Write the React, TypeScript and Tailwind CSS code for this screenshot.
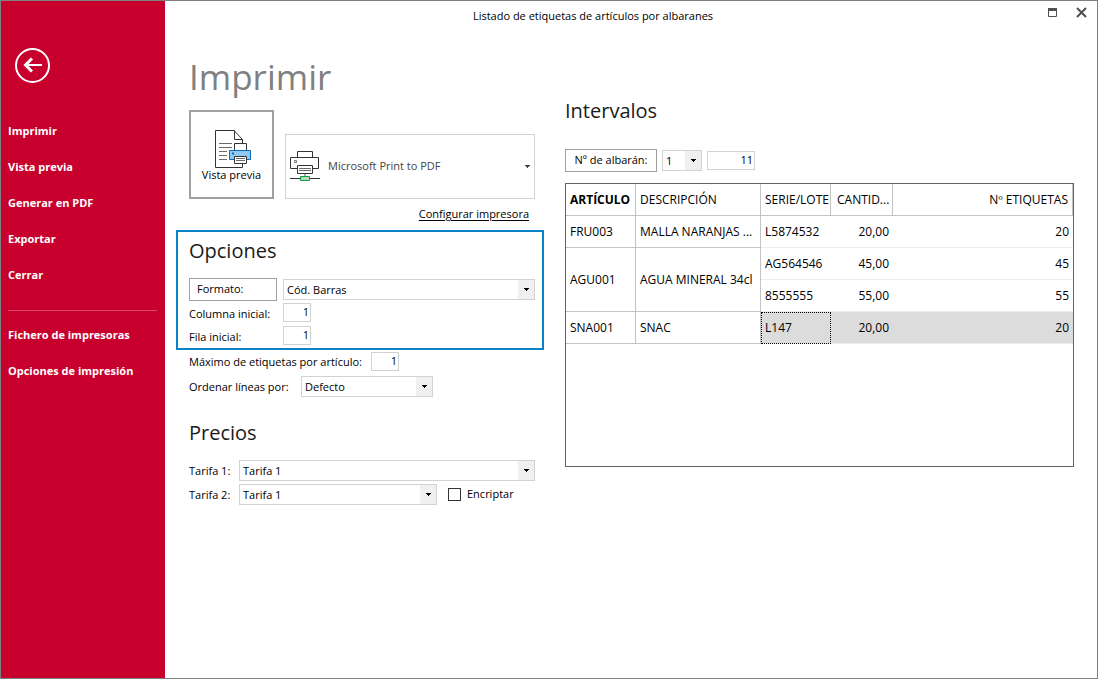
import type { ReactNode } from 'react';

const mainMenu = ['Imprimir', 'Vista previa', 'Generar en PDF', 'Exportar', 'Cerrar'];
const extraMenu = ['Fichero de impresoras', 'Opciones de impresión'];

interface Articulo {
  codigo: string;
  descripcion: string;
  selected?: boolean;
  lotes: Array<{ serie: string; cantidad: string; etiquetas: number }>;
}

const articulos: Articulo[] = [
  {
    codigo: 'FRU003',
    descripcion: 'MALLA NARANJAS ...',
    lotes: [{ serie: 'L5874532', cantidad: '20,00', etiquetas: 20 }],
  },
  {
    codigo: 'AGU001',
    descripcion: 'AGUA MINERAL 34cl',
    lotes: [
      { serie: 'AG564546', cantidad: '45,00', etiquetas: 45 },
      { serie: '8555555', cantidad: '55,00', etiquetas: 55 },
    ],
  },
  {
    codigo: 'SNA001',
    descripcion: 'SNAC',
    selected: true,
    lotes: [{ serie: 'L147', cantidad: '20,00', etiquetas: 20 }],
  },
];

function BackIcon() {
  return (
    <svg width="35" height="35" viewBox="0 0 35 35" fill="none" stroke="#fff" strokeWidth="2">
      <circle cx="17.5" cy="17.5" r="16.5" />
      <path d="M27 17H11" />
      <path d="M17 10.5L10.5 17L17 23.5" strokeWidth="3" />
    </svg>
  );
}

function PreviewIcon() {
  return (
    <svg width="41" height="38" viewBox="-4 0 41 38" fill="none" stroke="#333" strokeWidth="1">
      <path d="M.5 .5H19L27.5 9.500V37.500H.5Z" fill="#fff" />
      <path d="M19.500 .5V9.500H27.500" />
      <path d="M4 13.500H17M4 17.500H17M4 21.500H12M4 25.500H12M4 29.500H12" stroke="#6b6b6b" />
      <path d="M19.500 20V13.500H31.500V20" fill="#fff" />
      <path d="M14.500 20.500H35.500V29.500H14.500Z" fill="#91c8f1" stroke="#0f6cbd" />
      <path d="M17 23.500H19" stroke="#0f6cbd" strokeWidth="2" />
      <path d="M19.500 26.500H31.500V33.500H19.500Z" fill="#fff" />
      <path d="M21 28.500H30M21 30.500H30" stroke="#6b6b6b" />
    </svg>
  );
}

function PrinterIcon() {
  return (
    <svg width="30" height="33" viewBox="0 0 30 33" fill="none" stroke="#333" strokeWidth="1" className="shrink-0">
      <path d="M.5 7.500H28.500V18.500H.5Z" fill="#fff" />
      <path d="M7.500 7.500V1.500H22.500V7.500" />
      <path d="M4.500 10.500H6.500V12.500H4.500Z" stroke="#777" />
      <path d="M7.500 15.500H22.500V23.500H7.500Z" fill="#fff" />
      <path d="M9 18.500H21M9 20.500H21" stroke="#6b6b6b" />
      <path d="M15 24V26" stroke="#aaa" strokeWidth="2" />
      <path d="M0 28.500H30" />
      <path d="M10.500 26.500H19.500V30.500H10.500Z" fill="#b5dcb9" stroke="#109a43" />
    </svg>
  );
}

function Arrow() {
  return (
    <svg width="5" height="3" viewBox="0 0 5 3" fill="currentColor" shapeRendering="crispEdges">
      <path d="M0 0H5V1H4V2H3V3H2V2H1V1H0Z" />
    </svg>
  );
}

interface ComboProps {
  id: string;
  label?: string;
  value: string;
  className: string;
}

function Combo({ id, label, value, className }: ComboProps) {
  return (
    <div className={`grid h-[21px] border border-[#d2d2d2] ${className}`}>
      <select
        id={id}
        aria-label={label}
        className="col-start-1 row-start-1 w-full appearance-none bg-white pr-5 pl-[3px] text-[11px] leading-[19px] outline-none"
      >
        <option>{value}</option>
      </select>
      <span className="pointer-events-none col-start-1 row-start-1 flex w-4 items-center justify-center justify-self-end bg-[#f0f0f0]">
        <Arrow />
      </span>
    </div>
  );
}

function NumberBox({ id, label, value, className }: ComboProps) {
  return (
    <input
      id={id}
      aria-label={label}
      type="text"
      defaultValue={value}
      className={`h-[19px] border border-[#d2d2d2] px-px pb-[2px] text-right text-[11px] outline-none ${className}`}
    />
  );
}

function Heading({ children }: { children: ReactNode }) {
  return <h2 className="text-[20px] leading-8 text-[#1a1a1a]">{children}</h2>;
}

function Sidebar() {
  return (
    <aside className="w-[164px] shrink-0 bg-[#c8002d] text-[11px] font-bold text-white">
      <button type="button" aria-label="Volver" className="mt-[47px] ml-[14px] block">
        <BackIcon />
      </button>
      <nav className="mt-[30px] pr-2 pl-[7px]">
        {mainMenu.map((item) => (
          <a key={item} href="#" className="flex h-9 items-center">{item}</a>
        ))}
        <hr className="mt-[17px] mb-[6px] border-[#d94a6a]" />
        {extraMenu.map((item) => (
          <a key={item} href="#" className="flex h-9 items-center">{item}</a>
        ))}
      </nav>
    </aside>
  );
}

function TitleBar() {
  return (
    <header className="flex h-[30px] items-center">
      <p className="flex-1 text-center text-[11px]">Listado de etiquetas de artículos por albaranes</p>
      <div className="flex w-[76px] items-start justify-end gap-[19px] pr-[10px] pb-2 text-[#505050]">
        <button type="button" aria-label="Maximizar" className="mt-px">
          <svg width="9" height="9" viewBox="0 0 9 9" fill="none" stroke="currentColor">
            <path d="M.5 .5H8.500V8.500H.5Z" />
            <path d="M0 1.500H9" strokeWidth="3" />
          </svg>
        </button>
        <button type="button" aria-label="Cerrar ventana">
          <svg width="11" height="11" viewBox="0 0 11 11" fill="none" stroke="currentColor" strokeWidth="2">
            <path d="M1 1L10 10M10 1L1 10" />
          </svg>
        </button>
      </div>
    </header>
  );
}

function PrintPanel() {
  return (
    <section>
      <div className="pr-[9px] pl-[13px]">
        <h1 className="text-[35px] leading-[46px] text-[#808080]">Imprimir</h1>
        <div className="mt-[10px] flex items-end gap-[11px]">
          <button
            type="button"
            className="flex h-[89px] w-[85px] shrink-0 flex-col items-center border-2 border-[#a0a0a0] pt-[18px] text-[11px] leading-[14px]"
          >
            <PreviewIcon />
            Vista previa
          </button>
          <button
            type="button"
            className="flex h-[65px] flex-1 items-center border border-[#d2d2d2] pr-1 pl-1 text-[11px] text-[#444]"
          >
            <PrinterIcon />
            <span className="ml-2 flex-1 text-left">Microsoft Print to PDF</span>
            <Arrow />
          </button>
        </div>
        <div className="mt-[5px] flex h-5 items-center justify-end pr-[6px]">
          <a href="#" className="text-[11px] underline underline-offset-2">Configurar impresora</a>
        </div>
      </div>

      <div className="mt-[6px] h-[120px] border-2 border-[#0a82c8] pt-[3px] pr-[7px] pl-[11px]">
        <Heading>Opciones</Heading>
        <div className="mt-[11px] flex items-center gap-[6px]">
          <button type="button" className="h-[23px] w-[88px] border border-[#a0a0a0] pl-[7px] text-left">Formato:</button>
          <Combo id="formato" label="Formato" value="Cód. Barras" className="flex-1" />
        </div>
        <div className="mt-[2px] flex h-[19px] items-center">
          <label htmlFor="columna" className="w-[94px] pt-[3px]">Columna inicial:</label>
          <NumberBox id="columna" value="1" className="w-7" />
        </div>
        <div className="mt-1 flex h-[19px] items-center">
          <label htmlFor="fila" className="w-[94px] pt-[3px]">Fila inicial:</label>
          <NumberBox id="fila" value="1" className="w-7" />
        </div>
      </div>

      <div className="pt-[2px] pr-[9px] pl-[13px]">
        <div className="flex h-[19px] items-center">
          <label htmlFor="maximo" className="w-[182px] pt-[2px]">Máximo de etiquetas por artículo:</label>
          <NumberBox id="maximo" value="1" className="w-7" />
        </div>
        <div className="mt-[5px] flex items-center">
          <label htmlFor="orden" className="w-[112px] pt-[2px]">Ordenar líneas por:</label>
          <Combo id="orden" value="Defecto" className="w-[132px]" />
        </div>
        <div className="mt-5">
          <Heading>Precios</Heading>
        </div>
        <div className="mt-[11px] flex items-center">
          <label htmlFor="tarifa1" className="w-[50px] pt-[2px]">Tarifa 1:</label>
          <Combo id="tarifa1" value="Tarifa 1" className="flex-1" />
        </div>
        <div className="mt-[3px] flex items-center">
          <label htmlFor="tarifa2" className="w-[50px] pt-[2px]">Tarifa 2:</label>
          <Combo id="tarifa2" value="Tarifa 1" className="w-[198px]" />
          <input
            id="encriptar"
            type="checkbox"
            className="ml-[11px] size-[13px] appearance-none border border-[#333] checked:bg-[#333]"
          />
          <label htmlFor="encriptar" className="ml-[6px]">Encriptar</label>
        </div>
      </div>
    </section>
  );
}

function LabelsTable() {
  return (
    <div className="mt-[11px] h-[284px] border border-[#646464]">
      <table className="w-full table-fixed border-separate border-spacing-0 text-[12px] leading-4 whitespace-nowrap">
        <colgroup>
          <col className="w-[70px]" />
          <col className="w-[125px]" />
          <col className="w-[70px]" />
          <col className="w-[62px]" />
          <col />
        </colgroup>
        <thead>
          <tr className="h-8">
            <th className="border-r border-b border-[#c3c3c3] pl-1 text-left font-bold">ARTÍCULO</th>
            <th className="border-r border-b border-[#c3c3c3] pl-1 text-left font-normal">DESCRIPCIÓN</th>
            <th className="border-r border-b border-[#c3c3c3] pl-1 text-left font-normal">SERIE/LOTE</th>
            <th className="border-r border-b border-[#c3c3c3] pl-[6px] text-left font-normal">CANTID...</th>
            <th className="border-r border-b border-[#c3c3c3] pr-1 text-right font-normal">Nº ETIQUETAS</th>
          </tr>
        </thead>
        <tbody>
          {articulos.map((art) =>
            art.lotes.map((lote, i) => (
              <tr key={lote.serie} className="h-8">
                {i === 0 && (
                  <>
                    <td rowSpan={art.lotes.length} className="border-r border-b border-[#c3c3c3] pl-1">{art.codigo}</td>
                    <td rowSpan={art.lotes.length} className="border-r border-b border-[#c3c3c3] pl-1">
                      {art.descripcion}
                    </td>
                  </>
                )}
                <td
                  className={
                    art.selected
                      ? 'border-b border-[#ececec] bg-[#dcdcdc] pl-1 outline-1 -outline-offset-1 outline-black outline-dotted'
                      : 'border-b border-[#ececec] pl-1'
                  }
                >
                  {lote.serie}
                </td>
                <td className={`border-b border-[#ececec] pr-1 text-right ${art.selected ? 'bg-[#dcdcdc]' : ''}`}>
                  {lote.cantidad}
                </td>
                <td className={`border-b border-[#ececec] pr-1 text-right ${art.selected ? 'bg-[#dcdcdc]' : ''}`}>
                  {lote.etiquetas}
                </td>
              </tr>
            ))
          )}
        </tbody>
      </table>
    </div>
  );
}

function IntervalsPanel() {
  return (
    <section className="pt-[41px]">
      <Heading>Intervalos</Heading>
      <div className="mt-[22px] flex items-center gap-[5px]">
        <button type="button" className="h-[23px] w-[92px] border border-[#a0a0a0]">Nº de albarán:</button>
        <Combo id="serie" label="Serie del albarán" value="1" className="w-10" />
        <NumberBox id="albaran" label="Número de albarán" value="11" className="w-12" />
      </div>
      <LabelsTable />
    </section>
  );
}

export default function App() {
  return (
    <div className="flex min-h-screen border border-[#808080] bg-white font-['Open_Sans','Noto_Sans',sans-serif] text-[11px] text-black">
      <Sidebar />
      <div className="min-w-0 flex-1">
        <TitleBar />
        <main className="grid grid-cols-[368px_1fr] gap-[21px] pt-[23px] pr-[23px] pl-[11px]">
          <PrintPanel />
          <IntervalsPanel />
        </main>
      </div>
    </div>
  );
}
